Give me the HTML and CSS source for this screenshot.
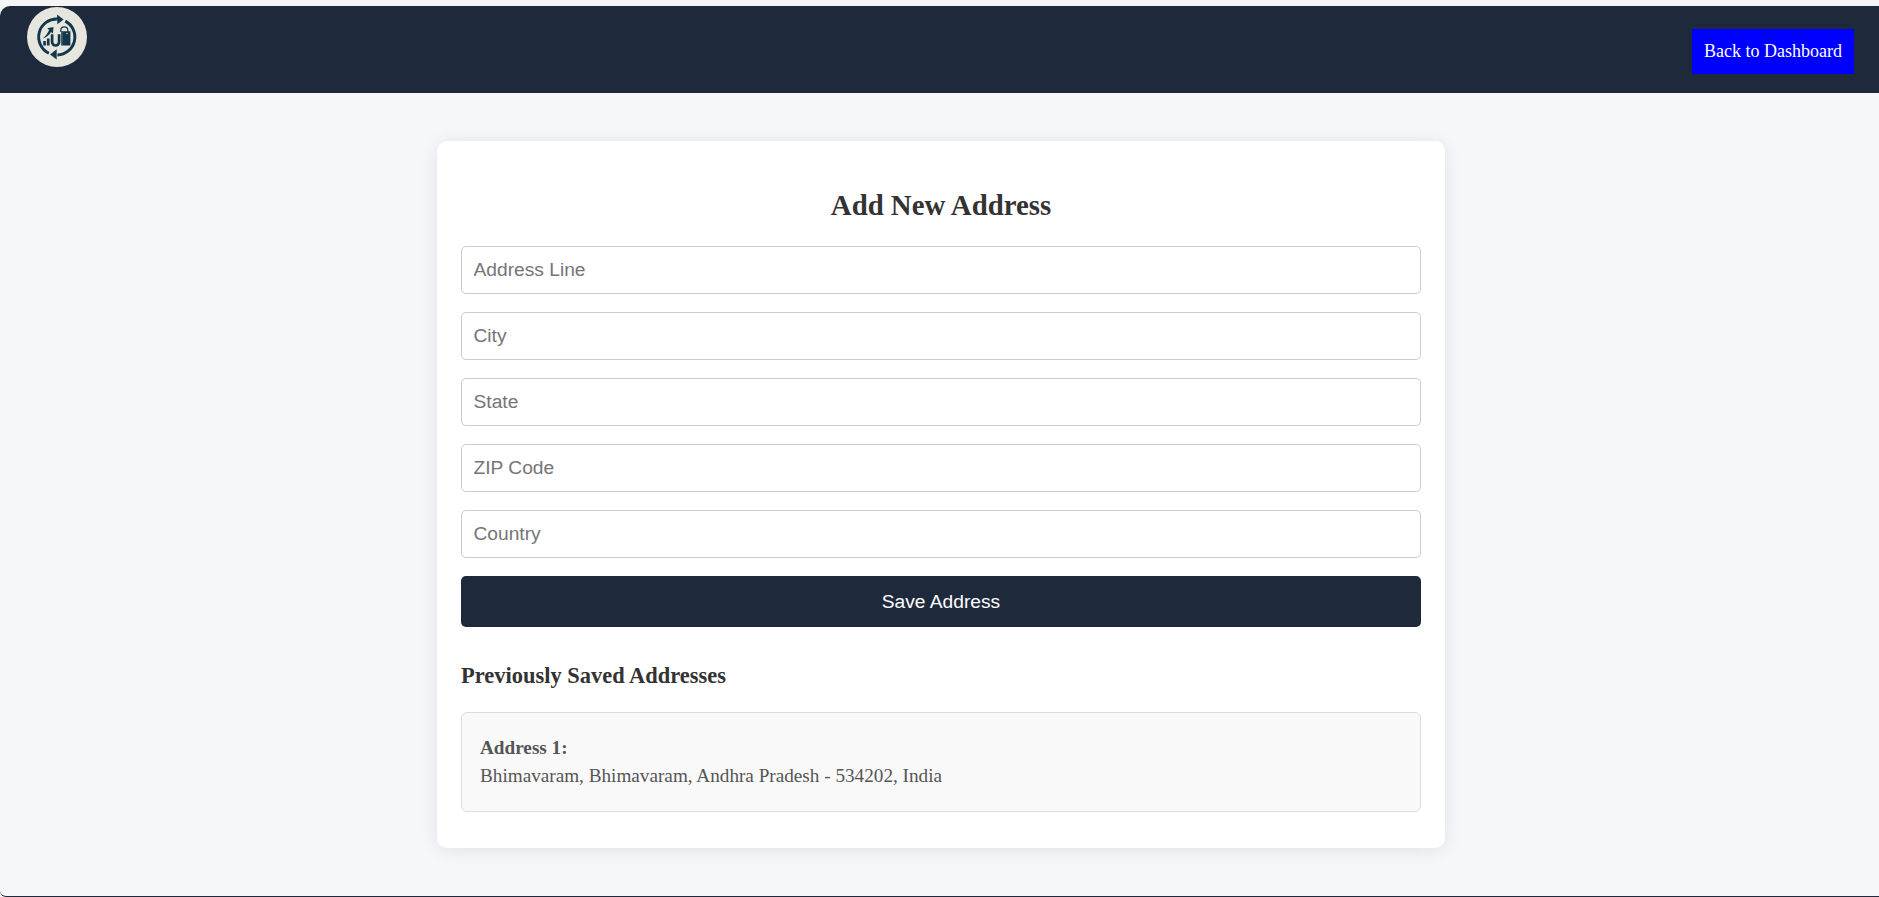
FILE: index.html
```html
<!DOCTYPE html>
<html lang="en">
<head>
<meta charset="utf-8">
<title>Add New Address</title>
<link rel="stylesheet" href="styles.css">
</head>
<body>
<div class="page">
  <header class="navbar">
    <svg class="logo" viewBox="0 0 60 60" aria-label="Logo">
      <circle cx="30" cy="30" r="30" fill="#e6e6df"/>
      <g fill="none" stroke="#12364a" stroke-width="2.9">
        <path d="M21.9 46.2A18 18 0 0 1 30.700 12"/>
        <path d="M38.300 14.100A18 18 0 0 1 30.400 48"/>
      </g>
      <g fill="#12364a">
        <path d="M30 7.500 36.600 12.400 30.400 17.200z"/>
        <path d="M29.700 42.300 23 47.400 29.700 52.500z"/>
        <path d="M16.200 34h2.700v4.600h-2.700zM19.900 31.500h2.700v7.100h-2.700z"/>
        <path d="M20.300 21.300l6.200-1.200-.6 6.500-1.900-1.700C22.200 28 19.500 30.300 15.700 31.400c2.800-2.100 4.800-4.800 6.400-8.400z"/>
        <path d="M34.200 24.200h9.200v14.300h-9.200z"/>
      </g>
      <path d="M25.100 27.300v7.700a3.500 3.500 0 0 0 7 0V27.300" fill="none" stroke="#12364a" stroke-width="2.700"/>
      <path d="M33.800 25v-1.700a3.500 3.500 0 0 1 7 0V25" fill="none" stroke="#12364a" stroke-width="1.200"/>
      <path d="M35.500 24.500v14" stroke="#57717b" stroke-width=".5"/>
      <circle cx="40" cy="26.500" r=".7" fill="#e6e6df"/>
    </svg>
    <a class="back">Back to Dashboard</a>
  </header>
  <main class="card">
    <h2 class="title">Add New Address</h2>
    <form class="form">
      <input class="field" type="text" placeholder="Address Line">
      <input class="field" type="text" placeholder="City">
      <input class="field" type="text" placeholder="State">
      <input class="field" type="text" placeholder="ZIP Code">
      <input class="field" type="text" placeholder="Country">
      <button class="save" type="button">Save Address</button>
    </form>
    <h3 class="subtitle">Previously Saved Addresses</h3>
    <div class="address">
      <strong>Address 1:</strong><br>
      Bhimavaram, Bhimavaram, Andhra Pradesh - 534202, India
    </div>
  </main>
</div>
</body>
</html>
```
FILE: styles.css
```css
* { box-sizing: border-box; }
html { height: 100%; background: #f5f5f5; overflow: hidden; }
body {
  margin: 0;
  padding-top: 6px;
  height: 897px;
  overflow: hidden;
  font-family: "Liberation Serif", "Times New Roman", serif;
}
.page {
  height: 891px;
  background: #f5f7fb;
  border-bottom: 1px solid #1e293b;
  border-radius: 10px 0 0 6px;
  overflow: hidden;
}
.navbar {
  display: flex;
  justify-content: space-between;
  align-items: flex-start;
  height: 87px;
  padding: 0 25px 0 27px;
  background: #1e293b;
}
.logo { width: 60px; height: 60px; margin-top: 1px; }
.back {
  margin-top: 23px;
  height: 45px;
  padding: 0 12px;
  background: #0000ff;
  color: #fff;
  font-size: 18px;
  line-height: 45px;
}
.card {
  width: 1008px;
  height: 707px;
  margin: 48px auto 0 437px;
  padding: 48px 24px 0;
  background: #fff;
  border-radius: 10px;
  box-shadow: 0 2px 18px rgba(0, 0, 0, 0.09);
}
.title {
  margin: 0 0 25px;
  text-align: center;
  font-size: 28.8px;
  line-height: 32px;
  color: #333;
}
.form { display: flex; flex-direction: column; gap: 18px; }
.field {
  height: 48px;
  padding: 0 11.5px 1px;
  border: 1px solid #ccc;
  border-radius: 5px;
  font: 19.2px "Liberation Sans", Arial, sans-serif;
  background: #fff;
}
.field::placeholder { color: #757575; }
.save {
  height: 51px;
  border: 0;
  border-radius: 5px;
  background: #1e293b;
  color: #fff;
  font: 19.2px "Liberation Sans", Arial, sans-serif;
}
.subtitle {
  margin: 36px 0 23px;
  font-size: 22.46px;
  line-height: 26px;
  color: #333;
}
.address {
  height: 100px;
  padding: 21px 18px;
  border: 1px solid #ddd;
  border-radius: 6px;
  background: #f9f9f9;
  color: #555;
  font-size: 19.2px;
  line-height: 28px;
}
```
